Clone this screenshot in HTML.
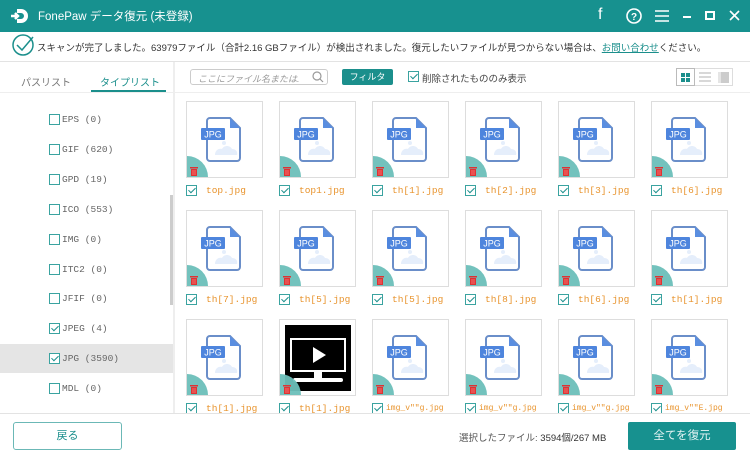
<!DOCTYPE html><html><head><meta charset="utf-8"><style>
*{margin:0;padding:0;box-sizing:border-box}
body{width:750px;height:458px;overflow:hidden;background:#fff;font-family:"Liberation Sans","Noto Sans CJK JP",sans-serif;position:relative;color:#333}
.a{position:absolute}
.hdr{left:0;top:0;width:750px;height:32px;background:#17918f}
.cb{position:absolute;width:11px;height:11px;border:1px solid #3aa3a0;background:#fff}
.cb.on::after{content:"";position:absolute;left:3px;top:0px;width:3px;height:6px;border:solid #1b8f8c;border-width:0 1.5px 1.5px 0;transform:rotate(45deg)}
.it{position:absolute;left:49px;font-family:"Liberation Mono","Noto Sans CJK JP",monospace;font-size:9.5px;color:#666}
.card{position:absolute;width:77px;height:77px;border:1px solid #ddd;background:#fff;overflow:hidden}
.lbl{position:absolute;font-family:"Liberation Mono",monospace;font-size:9.5px;color:#e8932c;white-space:nowrap}
</style></head><body>
<div class="a hdr"></div>
<svg class="a" style="left:10px;top:6px" width="20" height="20" viewBox="0 0 20 20"><path d="M7 3h4a7 7 0 0 1 0 14H7v-4h4a3 3 0 0 0 0-6H7z" fill="#fff"/><path d="M1 10h7M5 7l3 3-3 3" stroke="#fff" stroke-width="2.5" fill="none"/></svg>
<div class="a" style="left:38px;top:8px;color:#fff;font-size:11.5px">FonePaw データ復元 (未登録)</div>
<div class="a" style="left:598px;top:6px;color:#fff;font-size:16px">f</div>
<svg class="a" style="left:626px;top:8px" width="16" height="16"><circle cx="8" cy="8" r="7" fill="none" stroke="#fff" stroke-width="1.6"/><text x="8" y="12" font-size="10" fill="#fff" text-anchor="middle" font-family="Liberation Sans" font-weight="bold">?</text></svg>
<svg class="a" style="left:655px;top:10px" width="14" height="12"><path d="M0 1h14M0 6h14M0 11h14" stroke="#fff" stroke-width="1.5"/></svg>
<div class="a" style="left:683px;top:16px;width:8px;height:1.5px;background:#fff"></div>
<div class="a" style="left:705px;top:11px;width:10px;height:9px;border:2px solid #fff"></div>
<svg class="a" style="left:729px;top:10px" width="11" height="11"><path d="M1 1l9 9M10 1l-9 9" stroke="#fff" stroke-width="1.6"/></svg>
<svg class="a" style="left:11px;top:33px" width="24" height="24"><circle cx="12" cy="12" r="10" fill="none" stroke="#1b8f8c" stroke-width="1.5"/><path d="M6 12l5 5 11-13" fill="none" stroke="#1b8f8c" stroke-width="1.5"/></svg>
<div class="a" style="left:37px;top:40px;font-size:9.5px;color:#333;white-space:nowrap">スキャンが完了しました。63979ファイル（合計2.16 GBファイル）が検出されました。復元したいファイルが見つからない場合は、<span style="color:#1b8f8c;text-decoration:underline">お問い合わせ</span>ください。</div>
<div class="a" style="left:0;top:61px;width:750px;height:1px;background:#e3e3e3"></div>
<div class="a" style="left:173px;top:62px;width:2px;height:351px;background:#eee"></div>
<div class="a" style="left:21px;top:74px;font-size:10px;color:#777">パスリスト</div>
<div class="a" style="left:100px;top:74px;font-size:10px;color:#1b8f8c">タイプリスト</div>
<div class="a" style="left:91px;top:90px;width:75px;height:2px;background:#1b8f8c"></div>
<div class="a" style="left:0;top:92px;width:173px;height:1px;background:#eee"></div>
<div class="a" style="left:0;top:344px;width:173px;height:29px;background:#e5e5e5"></div>
<div class="a" style="left:170px;top:195px;width:3px;height:110px;background:#ccc"></div>
<div class="cb" style="left:49px;top:114px"></div><div class="it" style="left:62px;top:114px">EPS (0)</div>
<div class="cb" style="left:49px;top:144px"></div><div class="it" style="left:62px;top:144px">GIF (620)</div>
<div class="cb" style="left:49px;top:174px"></div><div class="it" style="left:62px;top:174px">GPD (19)</div>
<div class="cb" style="left:49px;top:204px"></div><div class="it" style="left:62px;top:204px">ICO (553)</div>
<div class="cb" style="left:49px;top:234px"></div><div class="it" style="left:62px;top:234px">IMG (0)</div>
<div class="cb" style="left:49px;top:264px"></div><div class="it" style="left:62px;top:264px">ITC2 (0)</div>
<div class="cb" style="left:49px;top:293px"></div><div class="it" style="left:62px;top:293px">JFIF (0)</div>
<div class="cb on" style="left:49px;top:323px"></div><div class="it" style="left:62px;top:323px">JPEG (4)</div>
<div class="cb on" style="left:49px;top:353px"></div><div class="it" style="left:62px;top:353px">JPG (3590)</div>
<div class="cb" style="left:49px;top:383px"></div><div class="it" style="left:62px;top:383px">MDL (0)</div>
<div class="a" style="left:190px;top:69px;width:138px;height:16px;border:1px solid #ccc;border-radius:3px"></div>
<div class="a" style="left:198px;top:72px;font-size:9px;color:#999;font-style:italic">ここにファイル名または.</div>
<svg class="a" style="left:312px;top:71px" width="12" height="12"><circle cx="5" cy="5" r="4" fill="none" stroke="#999" stroke-width="1.2"/><path d="M8 8l3 3" stroke="#999" stroke-width="1.2"/></svg>
<div class="a" style="left:342px;top:69px;width:51px;height:16px;background:#1b8f8c;border-radius:2px;color:#fff;font-size:9px;text-align:center;line-height:16px">フィルタ</div>
<div class="cb on" style="left:408px;top:71px"></div>
<div class="a" style="left:422px;top:71px;font-size:9.5px;color:#444">削除されたもののみ表示</div>
<div class="a" style="left:676px;top:68px;width:57px;height:18px;border:1px solid #ddd"></div>
<div class="a" style="left:676px;top:68px;width:19px;height:18px;border:1px solid #bbb;background:#fff"></div>
<svg class="a" style="left:681px;top:73px" width="9" height="9"><path d="M0 0h4v4H0zM5 0h4v4H5zM0 5h4v4H0zM5 5h4v4H5z" fill="#1b8f8c"/></svg>
<svg class="a" style="left:699px;top:72px" width="12" height="10"><path d="M0 1h12M0 5h12M0 9h12" stroke="#ccc" stroke-width="1.5"/></svg>
<div class="a" style="left:718px;top:72px;width:11px;height:11px;background:#ccc;border-left:3px solid #e5e5e5"></div>
<div class="a" style="left:175px;top:92px;width:575px;height:1px;background:#eee"></div>
<div id="g"></div>
<div class="a" style="left:0;top:413px;width:750px;height:45px;background:#fff;border-top:1px solid #e3e3e3"></div>
<div class="a" style="left:13px;top:422px;width:109px;height:28px;border:1px solid #6bb8b6;border-radius:3px;text-align:center;line-height:26px;font-size:11px;color:#1b8f8c">戻る</div>
<div class="a" style="left:459px;top:430px;font-size:9.5px;color:#555">選択したファイル: <span style="color:#333">3594個/267 MB</span></div>
<div class="a" style="left:628px;top:422px;width:108px;height:28px;background:#17918f;border-radius:2px;text-align:center;line-height:28px;font-size:11.5px;color:#e6f4f4">全てを復元</div>
<script>
var names=[["top.jpg","top1.jpg","th[1].jpg","th[2].jpg","th[3].jpg","th[6].jpg"],["th[7].jpg","th[5].jpg","th[5].jpg","th[8].jpg","th[6].jpg","th[1].jpg"],["th[1].jpg","th[1].jpg","img_v\"\"g.jpg","img_v\"\"g.jpg","img_v\"\"g.jpg","img_v\"\"E.jpg"]];
var icon='<svg style="position:absolute;left:14px;top:14px" width="46" height="48" viewBox="0 0 46 48"><path d="M9 2h20l10 10v30a3 3 0 0 1-3 3H9a3 3 0 0 1-3-3V5a3 3 0 0 1 3-3z" fill="#fff" stroke="#6a8ec9" stroke-width="2"/><path d="M29 2v10h10z" fill="#5a8ee0"/><path d="M14 39c0-5 4-7 7-6 2-4 8-4 10 0 4 0 6 3 5 6z" fill="#e5eefb"/><circle cx="23" cy="27" r="2" fill="#e5eefb"/><rect x="0" y="12" width="24" height="12" rx="1" fill="#4e85dd"/><text x="12" y="21.5" font-size="9" fill="#fff" text-anchor="middle" font-family="Liberation Sans">JPG</text></svg>';
var vid='<div style="position:absolute;left:5px;top:5px;width:66px;height:66px;background:#000"><div style="position:absolute;left:5px;top:13px;width:56px;height:34px;border:2px solid #fff"></div><div style="position:absolute;left:28px;top:22px;border-left:13px solid #fff;border-top:8px solid transparent;border-bottom:8px solid transparent"></div><div style="position:absolute;left:8px;top:53px;width:50px;height:4px;background:#fff;border-radius:3px"></div><div style="position:absolute;left:29px;top:47px;width:8px;height:8px;background:#fff"></div></div>';
var trash='<div style="position:absolute;left:-21px;top:54px;width:42px;height:42px;border-radius:50%;background:#6cbfb9;opacity:.95"></div><svg style="position:absolute;left:3px;top:64px" width="8" height="10"><rect x="0" y="1" width="8" height="1.5" fill="#d33"/><rect x="1" y="3" width="6" height="7" fill="#d33"/><path d="M3 4v5M5 4v5" stroke="#f88" stroke-width="0.7"/></svg>';
var h='';
for(var r=0;r<3;r++)for(var c=0;c<6;c++){var x=186+c*93,y=101+r*109;var lg=names[r][c].length>10;
h+='<div class="card" style="left:'+x+'px;top:'+y+'px">'+((r==2&&c==1)?vid:icon)+trash+'</div>';
h+='<div class="cb on" style="left:'+x+'px;top:'+(y+84)+'px"></div>';
h+='<div class="lbl" style="left:'+(x+(lg?14:20))+'px;top:'+(y+(lg?85:84))+'px;'+(lg?'font-size:8px':'')+'">'+names[r][c]+'</div>';}
document.getElementById('g').innerHTML=h;
</script>
</body></html>
